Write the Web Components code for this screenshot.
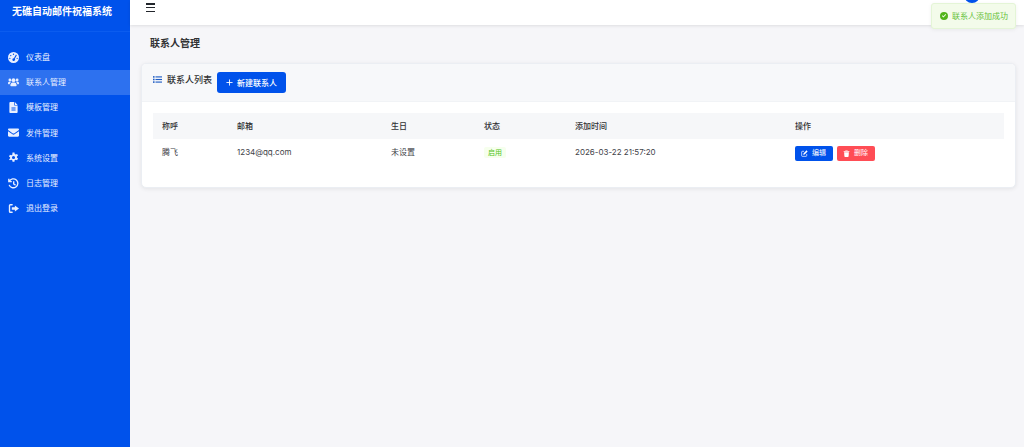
<!DOCTYPE html>
<html lang="zh-CN">
<head>
<meta charset="utf-8">
<title>联系人管理</title>
<style>
  html, body { margin: 0; height: 100%; }
  body { font-family: Inter, "Noto Sans CJK SC", sans-serif; color: #303133; background: #f6f6f9; overflow: hidden; }
</style>
</head>
<body>
<app-shell>
  <side-bar slot="side" heading="无礁自动邮件祝福系统">
    <nav-item icon="gauge">仪表盘</nav-item>
    <nav-item icon="users" active>联系人管理</nav-item>
    <nav-item icon="file">模板管理</nav-item>
    <nav-item icon="mail">发件管理</nav-item>
    <nav-item icon="gear">系统设置</nav-item>
    <nav-item icon="history">日志管理</nav-item>
    <nav-item icon="logout">退出登录</nav-item>
  </side-bar>
  <top-bar slot="top"></top-bar>
  <page-title>联系人管理</page-title>
  <contact-card>
    <data-row head>
      <span>称呼</span><span>邮箱</span><span>生日</span><span>状态</span><span>添加时间</span><span>操作</span>
    </data-row>
    <data-row>
      <span>腾飞</span><span>1234@qq.com</span><span>未设置</span>
      <span><status-tag>启用</status-tag></span>
      <span>2026-03-22 21:57:20</span>
      <span class="ops"><act-button kind="edit">编辑</act-button><act-button kind="del">删除</act-button></span>
    </data-row>
  </contact-card>
  <toast-msg slot="overlay">联系人添加成功</toast-msg>
</app-shell>

<script>
const ICONS = {
  gauge: '<path fill-rule="evenodd" d="M8 0a8 8 0 1 1 0 16A8 8 0 0 1 8 0zM8 2.200a1 1 0 1 0 0 2 1 1 0 0 0 0-2zM4 4.200a1 1 0 1 0 0 2 1 1 0 0 0 0-2zM2.700 8.200a1 1 0 1 0 0 2 1 1 0 0 0 0-2zM13.300 8.200a1 1 0 1 0 0 2 1 1 0 0 0 0-2zM11.600 3.800 8.600 9.100a2 2 0 1 0 1.300.7l3-5.200z"/>',
  users: '<circle cx="8" cy="4.600" r="2.800"/><circle cx="2.700" cy="4.200" r="2"/><circle cx="13.300" cy="4.200" r="2"/><path d="M0 9.500C0 7.700 1 6.700 2.500 6.700c.8 0 1.400.2 1.800.6-1.200.8-1.800 1.900-1.900 3.200H.8C.3 10.500 0 10.100 0 9.500zM16 9.500c0-1.800-1-2.800-2.500-2.800-.8 0-1.400.2-1.800.6 1.200.8 1.800 1.900 1.900 3.200h1.600c.5 0 .8-.4.800-1zM3.400 12.400C3.400 9.800 5 8 6.700 8h2.600c1.700 0 3.300 1.800 3.300 4.400 0 .6-.4 1.100-1 1.100H4.400c-.6 0-1-.5-1-1.100z"/>',
  file: '<path fill-rule="evenodd" d="M3.500 0H9v4.400c0 .5.300.8.800.8H14v9.300c0 .8-.7 1.500-1.500 1.500h-9C2.700 16 2 15.300 2 14.500v-13C2 .7 2.700 0 3.500 0zM10 0l4 4.200h-4zM5 8v1.500h6V8zM5 11v1.500h6V11z"/>',
  mail: '<path d="M1.500 2h13C15.300 2 16 2.700 16 3.500c0 .5-.2.900-.6 1.200L8.900 9.300c-.5.400-1.300.4-1.800 0L.6 4.700C.2 4.400 0 4 0 3.500 0 2.700.7 2 1.500 2zM0 6.200l6.500 4.500c.9.600 2.100.6 3 0L16 6.200v6.300c0 .8-.7 1.500-1.500 1.500h-13C.7 14 0 13.300 0 12.500z"/>',
  gear: '<path fill-rule="evenodd" d="M6.600 0h2.800l.4 2.200c.5.200.9.400 1.300.7l2.100-.8 1.400 2.400-1.700 1.400c.1.500.1 1 0 1.500l1.700 1.400-1.400 2.400-2.100-.8c-.4.300-.8.600-1.300.7l-.4 2.400H6.600l-.4-2.200c-.5-.2-.9-.4-1.300-.7l-2.100.8L1.400 10l1.700-1.400c-.1-.5-.1-1 0-1.500L1.400 5.700l1.400-2.400 2.100.8c.4-.3.8-.6 1.300-.7zM8 5a2.300 2.300 0 1 0 0 4.600A2.300 2.300 0 0 0 8 5z" transform="translate(0 .7)"/>',
  history: '<path d="M1.200 1v4.300h4.300M2 4.800A6.500 6.500 0 1 1 1.700 10M8.300 4.800v3.900l2.700 1.600" fill="none" stroke="currentColor" stroke-width="2"/>',
  logout: '<path d="M6 2.500H3.500c-.8 0-1.300.5-1.300 1.300v8.400c0 .8.500 1.300 1.300 1.300H6" fill="none" stroke="currentColor" stroke-width="2" stroke-linecap="round"/><path d="M10 3.500 16 8l-6 4.500V9.800H5.500V6.200H10z"/>',
  list: '<rect x="0" y="2" width="2.800" height="2.800"/><rect x="0" y="6.600" width="2.800" height="2.800"/><rect x="0" y="11.200" width="2.800" height="2.800"/><rect x="4.400" y="2.400" width="11.600" height="2"/><rect x="4.400" y="7" width="11.600" height="2"/><rect x="4.400" y="11.600" width="11.600" height="2"/>',
  edit: '<path d="M13 9v4.200c0 .8-.6 1.300-1.300 1.300H2.800c-.7 0-1.300-.6-1.300-1.300V4.300C1.500 3.600 2.100 3 2.800 3H7" fill="none" stroke="currentColor" stroke-width="1.600"/><path d="M12.700.8l2.500 2.500-7 7-3.100.6.600-3.100z"/>',
  trash: '<path d="M5.500 1h5l.5 1h3.500v2h-13V2H5zM2.500 5h11l-.7 9.500c-.1.800-.6 1.500-1.500 1.500H4.700c-.9 0-1.400-.7-1.500-1.500z"/>',
  check: '<path fill-rule="evenodd" d="M8 0a8 8 0 1 1 0 16A8 8 0 0 1 8 0zM12.200 5.400l-1.200-1.200-4.200 4.300-1.800-1.800-1.200 1.200 3 3z"/>',
  plus: '<path d="M8 1v14M1 8h14" fill="none" stroke="currentColor" stroke-width="2"/>'
};
const icon = (name, size) => `<svg viewBox="0 0 16 16" width="${size}" height="${size}" fill="currentColor" aria-hidden="true">${ICONS[name]}</svg>`;

class AppShell extends HTMLElement {
  constructor() {
    super();
    this.attachShadow({mode: 'open'}).innerHTML = `
      <style>
        :host { display: grid; grid-template-columns: 130px 1fr; grid-template-rows: 25px 1fr; height: 447px; position: relative; }
        .side { grid-row: 1 / 3; display: grid; }
        main { padding: 0 8px 0 11px; min-width: 0; }
      </style>
      <div class="side"><slot name="side"></slot></div>
      <slot name="top"></slot>
      <main><slot></slot></main>
      <slot name="overlay"></slot>`;
  }
}

class SideBar extends HTMLElement {
  constructor() {
    super();
    this.attachShadow({mode: 'open'}).innerHTML = `
      <style>
        :host { display: block; background: #0052eb; color: #fff; }
        h1 { margin: 0; height: 32px; box-sizing: border-box; padding: 3px 0 0 12px; border-bottom: 1px solid #0b5cef; font-size: 10px; line-height: 17px; font-weight: 700; white-space: nowrap; }
        nav { display: flex; flex-direction: column; padding-top: 12.500px; }
      </style>
      <h1>${this.getAttribute('heading')}</h1>
      <nav><slot></slot></nav>`;
  }
}

class NavItem extends HTMLElement {
  constructor() {
    super();
    this.attachShadow({mode: 'open'}).innerHTML = `
      <style>
        :host { display: flex; align-items: center; gap: 7px; height: 25.200px; padding-left: 8px; font-size: 8px; color: #e8efff; }
        :host([active]) { background: #2d71ef; }
        svg { flex: none; display: block; }
        span { line-height: 12px; }
      </style>
      ${icon(this.getAttribute('icon'), 11)}<span><slot></slot></span>`;
  }
}

class TopBar extends HTMLElement {
  constructor() {
    super();
    this.attachShadow({mode: 'open'}).innerHTML = `
      <style>
        :host { display: flex; justify-content: space-between; height: 25px; background: #fff; box-shadow: 0 1px 3px rgba(0,0,0,.1); overflow: hidden; position: relative; }
        .burger { margin: 3px 0 0 16px; width: 9px; height: 9px; display: flex; flex-direction: column; justify-content: space-between; }
        .burger i { display: block; height: 1.500px; background: #22262c; }
        .avatar { width: 16px; height: 16px; margin: -13px 44px 0 0; border-radius: 50%; background: #0052eb; }
      </style>
      <div class="burger"><i></i><i></i><i></i></div>
      <div class="avatar"></div>`;
  }
}

class PageTitle extends HTMLElement {
  constructor() {
    super();
    this.attachShadow({mode: 'open'}).innerHTML = `
      <style>
        :host { display: block; padding: 11px 0 12px 9px; font-size: 10px; line-height: 15px; font-weight: 600; color: #303133; height: 15px; }
      </style><slot></slot>`;
  }
}

class ContactCard extends HTMLElement {
  constructor() {
    super();
    this.attachShadow({mode: 'open'}).innerHTML = `
      <style>
        :host { display: block; height: 125px; box-sizing: border-box; border: 1px solid #ebeef3; border-radius: 5px; background: #fff; box-shadow: 0 1px 4px rgba(0,0,0,.08); overflow: hidden; }
        header { display: flex; align-items: flex-start; height: 38px; box-sizing: border-box; padding: 8px 11px; background: #f7f8fa; border-bottom: 1px solid #f1f3f6; }
        .t { display: flex; align-items: center; gap: 5px; height: 15px; font-size: 9px; font-weight: 500; color: #303133; margin-right: 5px; }
        .t svg { color: #1f5cc4; }
        button { display: flex; align-items: center; justify-content: center; gap: 4px; width: 69px; height: 21px; border: 0; border-radius: 3px; background: #0052eb; color: #fff; font: 500 8px Inter, "Noto Sans CJK SC", sans-serif; padding: 0; }
        button span { line-height: 12px; }
        .body { padding: 11px 11px 0; }
      </style>
      <header>
        <div class="t">${icon('list', 9)}联系人列表</div>
        <button>${icon('plus', 7)}<span>新建联系人</span></button>
      </header>
      <div class="body"><slot></slot></div>`;
  }
}

class DataRow extends HTMLElement {
  constructor() {
    super();
    this.attachShadow({mode: 'open'}).innerHTML = `
      <style>
        :host { display: block; font-size: 8px; line-height: 12px; color: #3f4349; }
        :host([head]) { background: #f6f7f9; font-weight: 500; color: #303133; }
        .g { display: grid; grid-template-columns: 75px 154px 93px 91px 220px 1fr; align-items: center; height: 26px; padding-left: 9px; }
        :host(:not([head])) .g { height: 28px; }
        :host(:not([head])) ::slotted(span) { padding-bottom: 2px; }
        :host(:not([head])) ::slotted(.ops) { padding-bottom: 0; }
        ::slotted(.ops) { display: flex; gap: 4px; margin-left: -.5px; }
      </style>
      <div class="g"><slot></slot></div>`;
  }
}

class StatusTag extends HTMLElement {
  constructor() {
    super();
    this.attachShadow({mode: 'open'}).innerHTML = `
      <style>
        :host { display: inline-block; padding: 0 4px; font-size: 7px; line-height: 11px; color: #52c41a; background: #f6ffed; border-radius: 2px; }
      </style><slot></slot>`;
  }
}

class ActButton extends HTMLElement {
  constructor() {
    super();
    const del = this.getAttribute('kind') === 'del';
    this.attachShadow({mode: 'open'}).innerHTML = `
      <style>
        :host { display: inline-flex; align-items: center; justify-content: center; gap: 4px; width: 38px; height: 15px; border-radius: 2px; font-size: 7px; color: #fff; background: ${del ? '#ff4d55' : '#0052eb'}; }
        span { line-height: 10px; }
      </style>${icon(del ? 'trash' : 'edit', 7)}<span><slot></slot></span>`;
  }
}

class ToastMsg extends HTMLElement {
  constructor() {
    super();
    this.attachShadow({mode: 'open'}).innerHTML = `
      <style>
        :host { position: absolute; top: 3px; right: 8px; display: flex; align-items: center; gap: 4px; box-sizing: border-box; width: 85px; height: 26px; padding-left: 8px; font-size: 8px; color: #67c23a; background: #f3fbea; border: 1px solid #e4f5d6; border-radius: 3px; box-shadow: 0 1px 4px rgba(0,0,0,.06); }
        svg { flex: none; color: #52b41a; }
        span { line-height: 12px; }
      </style>${icon('check', 8)}<span><slot></slot></span>`;
  }
}

customElements.define('app-shell', AppShell);
customElements.define('side-bar', SideBar);
customElements.define('nav-item', NavItem);
customElements.define('top-bar', TopBar);
customElements.define('page-title', PageTitle);
customElements.define('contact-card', ContactCard);
customElements.define('data-row', DataRow);
customElements.define('status-tag', StatusTag);
customElements.define('act-button', ActButton);
customElements.define('toast-msg', ToastMsg);
</script>
</body>
</html>
